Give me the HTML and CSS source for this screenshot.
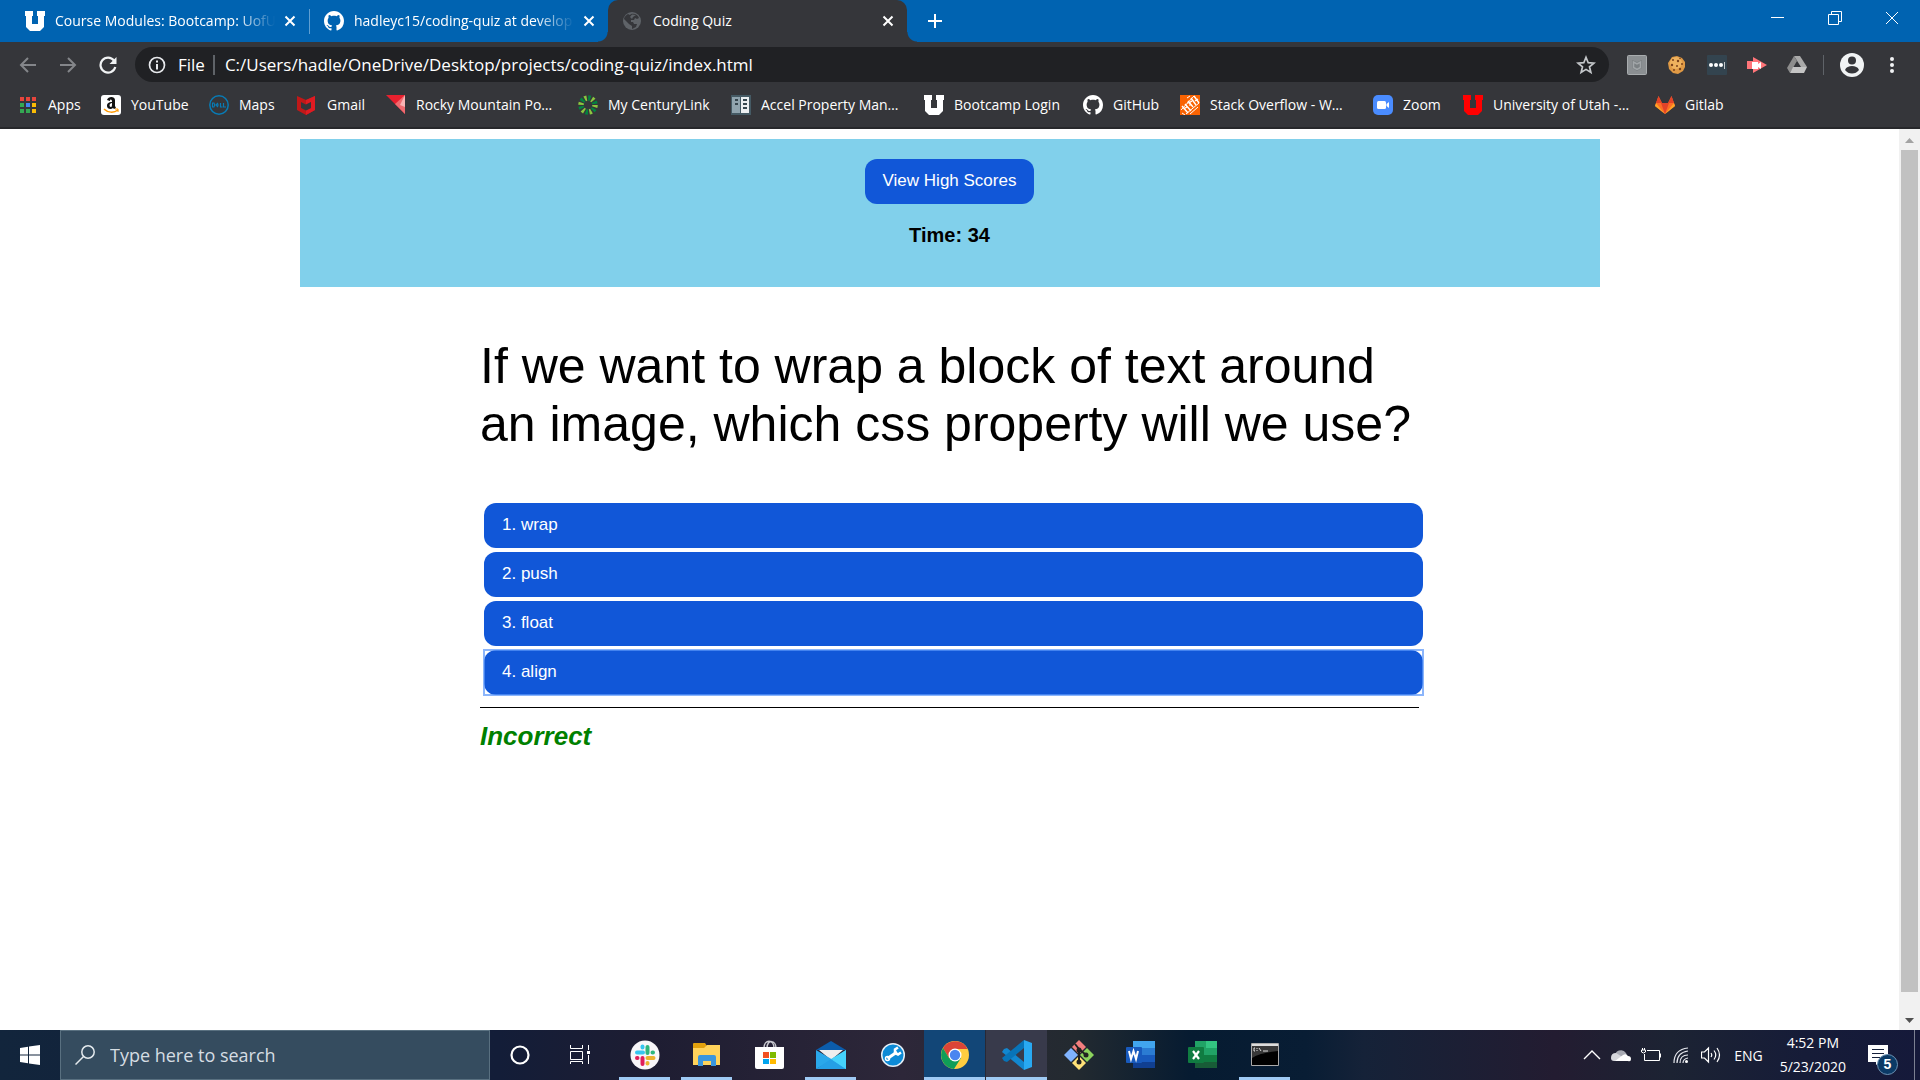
FILE: index.html
```html
<!DOCTYPE html>
<html lang="en">
<head>
<meta charset="utf-8">
<title>Coding Quiz</title>
<link rel="stylesheet" href="styles.css">
</head>
<body>
<svg class="defs" aria-hidden="true">
  <symbol id="block-u" viewBox="0 0 20 20"><path d="M0 0h8v5H7v8h6V5h-1V0h8v5h-1v11l-4 4H5l-4-4V5H0z"/></symbol>
  <symbol id="github" viewBox="0 0 16 16"><path d="M8 0C3.58 0 0 3.58 0 8c0 3.54 2.29 6.53 5.47 7.59.4.07.55-.17.55-.38 0-.19-.01-.82-.01-1.49-2.01.37-2.53-.49-2.69-.94-.09-.23-.48-.94-.82-1.13-.28-.15-.68-.52-.01-.53.63-.01 1.08.58 1.23.82.72 1.21 1.87.87 2.33.66.07-.52.28-.87.51-1.07-1.78-.2-3.64-.89-3.64-3.95 0-.87.31-1.59.82-2.15-.08-.2-.36-1.02.08-2.12 0 0 .67-.21 2.2.82.64-.18 1.32-.27 2-.27s1.36.09 2 .27c1.53-1.04 2.2-.82 2.2-.82.44 1.1.16 1.92.08 2.12.51.56.82 1.27.82 2.15 0 3.07-1.87 3.75-3.65 3.95.29.25.54.73.54 1.48 0 1.07-.01 1.93-.01 2.2 0 .21.15.46.55.38A8.01 8.01 0 0 0 16 8c0-4.42-3.58-8-8-8z"/></symbol>
  <symbol id="cross" viewBox="0 0 12 12"><path d="M1.500 1.500l9 9M10.500 1.500l-9 9" stroke="#fff" stroke-width="2"/></symbol>
</svg>

<header class="browser">
  <div class="tabstrip">
    <div class="tab">
      <svg class="icon20 white"><use href="#block-u"/></svg>
      <span class="tab-title fade">Course Modules: Bootcamp: UofU</span>
      <button class="plain" aria-label="Close tab"><svg class="icon12"><use href="#cross"/></svg></button>
    </div>
    <div class="tab divided">
      <svg class="icon20 white"><use href="#github"/></svg>
      <span class="tab-title fade">hadleyc15/coding-quiz at develop</span>
      <button class="plain" aria-label="Close tab"><svg class="icon12"><use href="#cross"/></svg></button>
    </div>
    <div class="tab active">
      <svg class="icon20" viewBox="0 0 20 20"><circle cx="9" cy="10" r="9" fill="#5f6368"/><path d="M8 3c4-1 7 1 8 4l-2 1-2-1-1 2-3 0 0 2 2 0 1 2 3 0-1 3-4 2 0-3-3-2-4-4-1-1c0-2 2-4 4-5l2 1z" fill="#35363a"/><path d="M9 3.500L7 6l2 2 1-2 3-2z" fill="#5f6368"/></svg>
      <span class="tab-title">Coding Quiz</span>
      <button class="plain" aria-label="Close tab"><svg class="icon12"><use href="#cross"/></svg></button>
    </div>
    <button class="plain new-tab" aria-label="New tab"><svg width="16" height="16" viewBox="0 0 16 16"><path d="M8 1v14M1 8h14" stroke="#fff" stroke-width="2"/></svg></button>
    <div class="window-controls">
      <button class="plain" aria-label="Minimize"><svg width="14" height="14" viewBox="0 0 14 14"><path d="M0 6.500h13" stroke="#fff"/></svg></button>
      <button class="plain" aria-label="Restore"><svg width="14" height="14" viewBox="0 0 14 14" fill="none" stroke="#fff"><path d="M.5 3.500h10v10H.5zM3.500 3.500v-3h10v10h-3"/></svg></button>
      <button class="plain" aria-label="Close"><svg width="14" height="14" viewBox="0 0 14 14"><path d="M1 1l12 12M13 1L1 13" stroke="#fff"/></svg></button>
    </div>
  </div>

  <div class="toolbar">
    <button class="plain nav" aria-label="Back"><svg width="18" height="18" viewBox="0 0 18 18" fill="none" stroke="#84868a" stroke-width="2"><path d="M17 9H2M9 2L2 9l7 7"/></svg></button>
    <button class="plain nav" aria-label="Forward"><svg width="18" height="18" viewBox="0 0 18 18" fill="none" stroke="#84868a" stroke-width="2"><path d="M1 9h15M9 2l7 7-7 7"/></svg></button>
    <button class="plain nav" aria-label="Reload"><svg width="18" height="18" viewBox="0 0 18 18"><path d="M15 4.500A7.500 7.500 0 1 0 16.300 11" fill="none" stroke="#f1f3f4" stroke-width="2.200"/><path d="M17.500 1v7h-7z" fill="#f1f3f4"/></svg></button>
    <div class="omnibox">
      <svg width="18" height="18" viewBox="0 0 18 18"><circle cx="9" cy="9" r="7.500" fill="none" stroke="#e8eaed" stroke-width="1.700"/><path d="M9 4.500v2M9 8v5.500" stroke="#e8eaed" stroke-width="2"/></svg>
      <label class="scheme" for="url">File</label>
      <input class="url" id="url" type="text" value="C:/Users/hadle/OneDrive/Desktop/projects/coding-quiz/index.html">
      <button class="plain" aria-label="Bookmark this page"><svg width="20" height="20" viewBox="0 0 20 20"><path d="M10 2.300l2.200 5.400 5.700.4-4.400 3.700 1.400 5.700-4.900-3.100-4.900 3.100 1.400-5.700L2.100 8.100l5.700-.4z" fill="none" stroke="#c4c7ca" stroke-width="1.700"/></svg></button>
    </div>
    <div class="extensions">
      <button class="plain" aria-label="WebAdvisor"><svg class="icon20" viewBox="0 0 20 20"><rect x=".5" y=".5" width="19" height="19" rx="1" fill="#8b8f92" stroke="#a8acae"/><path d="M5 5l5 2 5-2v8l-5 3-5-3z" fill="#7b8083"/><path d="M6.500 7v5.500l3.500 2 3.500-2V7L10 9z" fill="none" stroke="#a1a5a8" stroke-width="1.500"/></svg></button>
      <button class="plain" aria-label="Cookies"><svg class="icon20" viewBox="0 0 20 20"><path d="M5 2l5-1 5 2 3 4v5l-2 4-5 3-5-1-4-4L1 8z" fill="#e09a45"/><circle cx="9" cy="8" r="6" fill="#efb25e"/><g fill="#7b421b"><circle cx="6" cy="5" r="1"/><circle cx="11" cy="6" r="1.200"/><circle cx="5" cy="10" r="1.200"/><circle cx="10" cy="11" r="1"/><circle cx="15" cy="9" r="1"/><circle cx="13" cy="14" r="1.200"/><circle cx="7" cy="15" r="1"/><circle cx="13" cy="3.500" r=".8"/></g></svg></button>
      <button class="plain" aria-label="Passwords"><svg class="icon20" viewBox="0 0 20 20"><rect width="20" height="20" rx="1" fill="#33444f"/><g fill="#fff"><circle cx="4" cy="10" r="2"/><circle cx="9" cy="10" r="2"/><circle cx="14" cy="10" r="2"/><path d="M17 7h1v7h-1z" opacity=".7"/></g></svg></button>
      <button class="plain" aria-label="Screen recorder"><svg class="icon20" viewBox="0 0 20 20"><path d="M0 6h6V2l14 8-14 8v-4H0z" fill="#ff7579"/><path d="M5 7h6v2l3-2v7l-3-2v2H5z" fill="#fff"/></svg></button>
      <button class="plain" aria-label="Drive"><svg class="icon20" viewBox="0 0 20 20"><path d="M7 1h6l7 11h-6z" fill="#aaa"/><path d="M7 1l3 5-7 12-3-5z" fill="#8d8d8d"/><path d="M6 12h14l-3 6H3z" fill="#c4c4c4"/><path d="M10 7l3 5H7z" fill="#35363a"/></svg></button>
    </div>
    <button class="plain profile" aria-label="Profile"><svg width="24" height="24" viewBox="0 0 24 24"><circle cx="12" cy="12" r="12" fill="#f1f3f4"/><circle cx="12" cy="7.500" r="4" fill="#35363a"/><path d="M5 17c1-3 4-4 7-4s6 1 7 4c-2 2.500-4 3.500-7 3.500S7 19.500 5 17z" fill="#35363a"/></svg></button>
    <button class="plain menu" aria-label="Menu"><svg width="4" height="18" viewBox="0 0 4 18" fill="#f1f3f4"><circle cx="2" cy="3" r="2"/><circle cx="2" cy="9" r="2"/><circle cx="2" cy="15" r="2"/></svg></button>
  </div>

  <nav class="bookmarks" aria-label="Bookmarks">
    <a href="#"><svg width="18" height="18" viewBox="0 0 18 18"><path d="M0 1h4v4H0zM6 1h4v4H6zM12 1h4v4h-4z" fill="#e8453c"/><path d="M0 7h4v4H0zM0 13h4v4H0zM6 13h4v4H6z" fill="#34a853"/><path d="M6 7h4v4H6z" fill="#4285f4"/><path d="M12 7h4v4h-4zM12 13h4v4h-4z" fill="#fbbc05"/></svg><span>Apps</span></a>
    <a href="#"><svg class="icon20" viewBox="0 0 20 20"><rect width="20" height="20" rx="3" fill="#fff"/><path d="M6 5c1-4 8-4 8 0v6l1 2-2 1-1-1c-2 2-6 1-6-2 0-3 2-4 5-4 0-3-2-3-2-1zM11 8c-3 0-3 4-1 4 1 0 1-2 1-4z" fill="#111"/><path d="M3 14c4 4 10 4 14 1" fill="none" stroke="#f90" stroke-width="1.500"/><path d="M14 14h3v3" fill="none" stroke="#f90"/></svg><span>YouTube</span></a>
    <a href="#"><svg class="icon20" viewBox="0 0 20 20" fill="none" stroke="#087bb5"><circle cx="10" cy="10" r="9.200" stroke-width="1.500"/><path d="M3.500 8v4h1.500q1.500-2 0-4zM9 8L7 10l2 2M8 10h2M11.500 8v4h2M14.500 8v4H17" stroke-width="1.200"/></svg><span>Maps</span></a>
    <a href="#"><svg class="icon20" viewBox="0 0 20 20"><path d="M0 1l9 4 9-4v14l-9 5-9-5z" fill="#c01818"/><path d="M9 5l9-4v14l-9 5v-5l5-2V7L9 9.500 4 7v6l5 2v5" fill="#e01b22"/><path d="M4 7l5 2.500L14 7v6l-5 2.500L4 13z" fill="#35363a"/></svg><span>Gmail</span></a>
    <a href="#"><svg class="icon20" viewBox="0 0 20 20"><path d="M0 0h19v19z" fill="#e8202e"/><path d="M9 9L19 0v19z" fill="#ef6b70"/><path d="M14 10l5-10v12z" fill="#f9b4b4"/></svg><span>Rocky Mountain Po…</span></a>
    <a href="#"><svg class="icon20" viewBox="0 0 20 20" fill="none" stroke-width="5.500"><circle cx="10" cy="10" r="7" stroke="#8cc63f" stroke-dasharray="2.200 5.130"/><circle cx="10" cy="10" r="7" stroke="#00853f" stroke-dasharray="2.200 5.130" stroke-dashoffset="3.660"/></svg><span>My CenturyLink</span></a>
    <a href="#"><svg class="icon20" viewBox="0 0 20 20"><path d="M0 0h20v20H0z" fill="#455a64"/><path d="M1 2h8v16H1z" fill="#90a4ae"/><path d="M10 2h8v16h-8z" fill="#eceff1"/><path d="M4 4h3v2H4zM4 8h3v2H4zM12 4h4v2h-4zM12 8h4v2h-4zM12 12h4v2h-4z" fill="#37474f"/></svg><span>Accel Property Man…</span></a>
    <a href="#"><svg class="icon20 white"><use href="#block-u"/></svg><span>Bootcamp Login</span></a>
    <a href="#"><svg class="icon20 white"><use href="#github"/></svg><span>GitHub</span></a>
    <a href="#"><svg class="icon20" viewBox="0 0 20 20"><path d="M0 0h20v20H0z" fill="#f96302"/><g stroke="#fff" fill="none"><path d="M2 11l6 7M5 9l6 7M3.500 14L7 12M8 6l5 6M11 3l5 7M9 8l3-2M14 1l5 7M15 6l3-2" stroke-width="1.400"/><path d="M1 15l13-14M6 19L19 8M7 8q3-1 3 3M10 19l8-7M2 18l3 2M7 3l3-2" stroke-width="1"/></g></svg><span>Stack Overflow - W…</span></a>
    <a href="#"><svg class="icon20" viewBox="0 0 20 20"><rect width="20" height="20" rx="5" fill="#4a8cff"/><rect x="4" y="6" width="9" height="8" rx="1.500" fill="#fff"/><path d="M13.500 9L16 7v6l-2.500-2z" fill="#fff"/></svg><span>Zoom</span></a>
    <a href="#"><svg class="icon20 red"><use href="#block-u"/></svg><span>University of Utah -…</span></a>
    <a href="#"><svg class="icon20" viewBox="0 0 20 20"><path d="M10 19L0 11 3.500 1 7 8h6l3.500-7L20 11z" fill="#fc6d26"/><path d="M6 8h8l-4 11z" fill="#e24329"/><path d="M3.500 1L7 8H1zM16.500 1L13 8h6z" fill="#e24329"/><path d="M10 19L0 11l1-3zM10 19l10-8-1-3z" fill="#fca326"/></svg><span>Gitlab</span></a>
  </nav>
</header>

<div class="viewport">
  <div class="page">
    <header class="quiz-header">
      <button class="btn">View High Scores</button>
      <p class="timer">Time: 34</p>
    </header>
    <main class="quiz">
      <h1 class="question">If we want to wrap a block of text around an image, which css property will we use?</h1>
      <ul class="answers">
        <li><button class="btn">1. wrap</button></li>
        <li><button class="btn">2. push</button></li>
        <li><button class="btn">3. float</button></li>
        <li class="focused"><button class="btn">4. align</button></li>
      </ul>
      <p class="feedback">Incorrect</p>
    </main>
  </div>
  <div class="scrollbar" aria-hidden="true">
    <svg width="9" height="5" viewBox="0 0 9 5"><path d="M0 5l4.500-5L9 5z" fill="#a3a3a3"/></svg>
    <div class="thumb"></div>
    <svg width="9" height="5" viewBox="0 0 9 5"><path d="M0 0l4.500 5L9 0z" fill="#505050"/></svg>
  </div>
</div>

<footer class="taskbar">
  <button class="plain start" aria-label="Start"><svg class="icon20" viewBox="0 0 20 20" fill="#fff"><path d="M0 3l8-1.200V9.500H0zM9 1.600L20 0v9.500H9zM0 10.500h8v7.700L0 17zM9 10.500h11V20L9 18.400z"/></svg></button>
  <div class="search">
    <svg class="icon20" viewBox="0 0 20 20" fill="none" stroke="#e4eaee" stroke-width="1.500"><circle cx="13" cy="7" r="6.200"/><path d="M8.500 11.500L.5 19.500"/></svg>
    <input type="text" placeholder="Type here to search" aria-label="Type here to search">
  </div>
  <button class="plain system" aria-label="Cortana"><svg class="icon20" viewBox="0 0 20 20"><circle cx="10" cy="10" r="8.500" fill="none" stroke="#fff" stroke-width="2.200"/></svg></button>
  <button class="plain system" aria-label="Task View"><svg class="icon20" viewBox="0 0 20 20" fill="none" stroke="#fff"><path d="M.5 0v3.500h12V0M.5 6.500h12v8H.5zM.5 19v-2.500h12V19M18.500 0v5M18.500 10v9"/><path d="M17 6h3v3h-3z" fill="#fff" stroke="none"/></svg></button>
  <div class="apps">
    <button class="app running" aria-label="Slack"><svg width="30" height="30" viewBox="0 0 30 30"><circle cx="15" cy="15" r="14.500" fill="#f8f6f8"/><g stroke-width="4" stroke-linecap="round"><path d="M7 12.500h6M12.500 6.500v1" stroke="#36c5f0"/><path d="M17.500 7v6M23 12.500h-.5" stroke="#2eb67d"/><path d="M17.500 18h6M17.500 23v.5" stroke="#ecb22e"/><path d="M12.500 18v6M7.500 18H7" stroke="#e01e5a"/></g></svg></button>
    <button class="app running" aria-label="File Explorer"><svg width="30" height="30" viewBox="0 0 30 30"><path d="M1 4q0-1 1-1h11l2 3-2 4H1z" fill="#e2a10d"/><path d="M1 8h11l3-3h13v20H1z" fill="#ffd35b"/><path d="M6 26V17q0-2 2-2h14q2 0 2 2v9h-5v-5h-8v5z" fill="#3a96dd"/></svg></button>
    <button class="app" aria-label="Microsoft Store"><svg width="30" height="30" viewBox="0 0 30 30"><path d="M10 8c0-9 10-9 10 0M13 8c0-9 9-8 9 0" fill="none" stroke="#c9c9d0" stroke-width="1.500"/><path d="M1 7h29v20q0 2-2 2H3q-2 0-2-2z" fill="#fff"/><path d="M9 12h6v6H9z" fill="#f25022"/><path d="M16 12h6v6h-6z" fill="#7fba00"/><path d="M9 19h6v5H9z" fill="#00a4ef"/><path d="M16 19h6v5h-6z" fill="#ffb900"/></svg></button>
    <button class="app running" aria-label="Mail"><svg width="30" height="30" viewBox="0 0 30 30"><path d="M0 10l15-9 15 9z" fill="#0b5cab"/><path d="M3 10h24L15 20z" fill="#eee"/><path d="M0 10l17 10-17 9z" fill="#2aa8ea"/><path d="M30 10L4 29h26z" fill="#3ec5f5"/><path d="M0 29L15 19l15 10z" fill="#25a0e6"/><path d="M30 10L15 19l15 10z" fill="#45d2fb"/></svg></button>
    <button class="app" aria-label="Support tool"><svg width="30" height="30" viewBox="0 0 30 30"><circle cx="15" cy="15" r="11.300" fill="#0c8ad6" stroke="#e5eef5" stroke-width="1.500"/><path d="M9.500 18.500L19 12" stroke="#fff" stroke-width="3"/><circle cx="9.500" cy="18.500" r="2" fill="none" stroke="#fff" stroke-width="1.500"/><path d="M20 7.500l-3 2v3.500l3 1.500 3-2" fill="none" stroke="#fff" stroke-width="2.500"/></svg></button>
    <button class="app running chrome" aria-label="Chrome"><svg width="30" height="30" viewBox="0 0 30 30"><circle cx="15" cy="15" r="14" fill="#ffcd40"/><path d="M3 8a14 14 0 0 1 24.500 1H15l-6 9z" fill="#db4437"/><path d="M3 8a14 14 0 0 0 11 21l7-11-12 0z" fill="#0f9d58"/><circle cx="15" cy="15" r="6.500" fill="#fff"/><circle cx="15" cy="15" r="5.200" fill="#4a86f0"/></svg></button>
    <button class="app running code" aria-label="Visual Studio Code"><svg width="30" height="30" viewBox="0 0 30 30"><path d="M2 9l3-1 17 14v8L0 12z" fill="#1287d0"/><path d="M2 21l3 1L22 8V0L0 18z" fill="#0874b9"/><path d="M22 0l8 3v24l-8 3z" fill="#29a9f2"/></svg></button>
    <button class="app" aria-label="Git Bash"><svg width="30" height="30" viewBox="0 0 30 30"><path d="M15 0l7 7-7 7-7-7z" fill="#f37e7e"/><path d="M23 8l7 7-7 7-7-7z" fill="#8cd35d"/><path d="M15 16l7 7-7 7-7-7z" fill="#ffe278"/><path d="M7 8l7 7-7 7-7-7z" fill="#80b3ff"/><path d="M11 4l4 5v13M15 9l7 6" fill="none" stroke="#222" stroke-width="2"/><g fill="#222"><circle cx="15" cy="10" r="2.500"/><circle cx="22" cy="15" r="2.500"/><circle cx="15" cy="22" r="2.500"/></g></svg></button>
    <button class="app" aria-label="Word"><svg width="30" height="30" viewBox="0 0 30 30"><path d="M7 1h22v7H7z" fill="#41a5ee"/><path d="M7 8h22v7H7z" fill="#2b7cd3"/><path d="M7 15h22v7H7z" fill="#185abd"/><path d="M7 22h22v6H7z" fill="#103f91"/><rect y="7" width="16" height="16" rx="1" fill="#185abd"/><path d="M3 11l2 8 2.500-8L10 19l2-8" fill="none" stroke="#fff" stroke-width="2"/></svg></button>
    <button class="app" aria-label="Excel"><svg width="30" height="30" viewBox="0 0 30 30"><path d="M7 1h11v7H7zM7 8h11v7H7z" fill="#21a366"/><path d="M18 1h11v7H18z" fill="#33c481"/><path d="M18 8h11v7H18z" fill="#21a366"/><path d="M7 15h22v7H7z" fill="#107c41"/><path d="M7 22h22v6H7z" fill="#185c37"/><rect y="7" width="16" height="16" rx="1" fill="#107c41"/><path d="M5 11l6 8M11 11l-6 8" stroke="#fff" stroke-width="2.200"/></svg></button>
    <button class="app running" aria-label="Command Prompt"><svg width="30" height="30" viewBox="0 0 30 30"><path d="M1.500 3.500h27v22h-27z" fill="#000" stroke="#a9a9a9"/><path d="M2 4h26v2H2z" fill="#ddd"/><path d="M2 6h26v5C18 12 8 14 2 18z" fill="#383838"/><path d="M5 8H4v3h1M7 8v1M7 10v1M9 8l2 3M13 11h5" fill="none" stroke="#ddd"/></svg></button>
  </div>
  <div class="tray">
    <svg width="18" height="10" viewBox="0 0 18 10"><path d="M1 9l8-8 8 8" fill="none" stroke="#fff" stroke-width="1.400"/></svg>
    <svg class="icon20" viewBox="0 0 20 20"><path d="M4 12a6 6 0 0 1 11-4l2 5-12 2z" fill="#a9abb4"/><path d="M0 13q0-5 5-5l13 8H3q-3 0-3-3z" fill="#d6d7dc"/><path d="M4 16l8-6q3-2 5 1 3 0 3 3t-3 2z" fill="#fff"/></svg>
    <svg class="icon20" viewBox="0 0 20 20" fill="none" stroke="#fff"><path d="M6 5.500h12.500v10h-15V9M19.500 8.500v4M.5 5h4v2q-2 2-4 0zM1.500 5V3M3.500 5V3"/></svg>
    <svg class="icon20" viewBox="0 0 20 20" fill="none" stroke="#e6e8ee" stroke-width="1.200"><path d="M3 18C3 9 8 4 17 3M6 18C6 11 10 7 17 6M9 18C9 13 12 10 17 10M12 18q0-4 5-5"/><circle cx="15.500" cy="16.500" r="1.500" fill="#fff" stroke="none"/></svg>
    <svg class="icon20" viewBox="0 0 20 20" fill="none" stroke="#fff" stroke-width="1.200"><path d="M.5 7h3l4-4v14l-4-4h-3zM10 8q1.500 2 0 4M13 5.500q3.500 4.500 0 9M16 3q5 7 0 14"/></svg>
    <span class="lang">ENG</span>
    <div class="clock"><time>4:52 PM</time><time>5/23/2020</time></div>
    <button class="plain notice" aria-label="Notifications"><svg class="icon20" viewBox="0 0 20 20"><path d="M0 0h20v17h-8l-4 3v-3H0z" fill="#fff"/><path d="M4 4.500h12M4 8.500h12M4 12.500h8" stroke="#15203a"/></svg><span class="badge">5</span></button>
  </div>
</footer>
</body>
</html>
```

FILE: styles.css
```css
* { box-sizing: border-box; }

body {
  margin: 0;
  height: 100vh;
  display: flex;
  flex-direction: column;
  overflow: hidden;
  background: #fff;
  font-family: "Open Sans", "Noto Sans", sans-serif;
  font-size: 14px;
}

svg { display: block; flex: none; }
p, h1, ul { margin: 0; padding: 0; }
.defs { position: absolute; width: 0; height: 0; }
.icon20 { width: 20px; height: 20px; }
.icon12 { width: 12px; height: 12px; }
.white { fill: #fff; }
.red { fill: #f00; }

.plain {
  display: flex;
  align-items: center;
  justify-content: center;
  padding: 0;
  border: 0;
  background: none;
  color: inherit;
  flex: none;
}

/* Browser chrome */
.browser {
  background: #35363a;
  color: #fff;
  border-bottom: 2px solid #27282b;
  flex: none;
}

.tabstrip {
  display: flex;
  height: 42px;
  padding-left: 10px;
  background: #0063b1;
}

.tab {
  position: relative;
  display: flex;
  align-items: center;
  width: 299px;
  padding: 0 13px 0 15px;
}

.tab.divided::before {
  content: "";
  position: absolute;
  left: 0;
  top: 9px;
  width: 1px;
  height: 25px;
  background: #5f9fd2;
}

.tab-title {
  flex: 1;
  margin: 0 2px 0 10px;
  padding-bottom: 2px;
  overflow: hidden;
  white-space: nowrap;
}
.fade { mask-image: linear-gradient(to right, #000 80%, transparent 97%); }

.tab.active { background: #35363a; border-radius: 10px 10px 0 0; }
.tab.active::before,
.tab.active::after {
  content: "";
  position: absolute;
  bottom: 0;
  width: 10px;
  height: 10px;
}
.tab.active::before { left: -10px; background: radial-gradient(circle at 0 0, transparent 9px, #35363a 10px); }
.tab.active::after { right: -10px; background: radial-gradient(circle at 100% 0, transparent 9px, #35363a 10px); }

.new-tab { width: 56px; }
.window-controls { display: flex; margin-left: auto; }
.window-controls .plain { width: 57px; height: 36px; }

.toolbar {
  display: flex;
  align-items: center;
  height: 45px;
  padding: 0 16px 0 8px;
}
.nav { width: 40px; height: 36px; }

.omnibox {
  display: flex;
  align-items: center;
  flex: 1;
  height: 35px;
  margin-left: 7px;
  padding: 0 13px;
  border-radius: 18px;
  background: #202124;
  font-size: 17px;
}
.scheme {
  margin-left: 12px;
  padding-right: 8px;
  border-right: 2px solid #5f6368;
  line-height: 20px;
}
.url {
  flex: 1;
  min-width: 0;
  margin-left: 10px;
  padding: 0;
  border: 0;
  background: none;
  color: #fff;
  font: inherit;
}

.extensions { display: flex; gap: 20px; margin-left: 18px; padding-right: 17px; position: relative; }
.extensions::after {
  content: "";
  position: absolute;
  right: 0;
  top: 0;
  width: 1px;
  height: 20px;
  background: #5f6368;
}
.profile { margin-left: 16px; }
.menu { width: 24px; margin-left: 16px; }

.bookmarks {
  display: grid;
  grid-template-columns: 81px 108px 88px 89px 192px 153px 193px 159px 97px 193px 90px 192px auto;
  align-items: center;
  height: 40px;
  padding: 0 20px 4px;
}
.bookmarks a {
  display: flex;
  align-items: center;
  gap: 10px;
  color: #fff;
  text-decoration: none;
  white-space: nowrap;
}
.bookmarks span { padding-bottom: 2px; }

/* Quiz page */
.viewport { display: flex; flex: 1; min-height: 0; }
.page {
  flex: 1;
  padding: 10px;
  font-family: "Liberation Sans", Arial, sans-serif;
  color: #000;
}

.quiz-header {
  display: flex;
  flex-direction: column;
  align-items: center;
  gap: 20px;
  max-width: 1300px;
  height: 148px;
  margin: 0 auto;
  padding-top: 20px;
  background: #81d0eb;
}

.btn {
  height: 45px;
  padding: 0 18px 1px;
  border: 0;
  border-radius: 12px;
  background: #1157d8;
  color: #fff;
  font-family: inherit;
  font-size: 17px;
}

.timer { font-size: 20px; font-weight: bold; line-height: 23px; }

.quiz { max-width: 939px; margin: 50px auto 0; }
.question { font-size: 50px; font-weight: normal; line-height: 58px; }

.answers {
  display: grid;
  gap: 4px;
  margin: 50px -4px 12px 4px;
  list-style: none;
}
.answers .btn { display: block; width: 100%; text-align: left; }
.focused { outline: 2px solid rgba(90, 150, 250, 0.7); outline-offset: -1px; }

.feedback {
  padding-top: 13px;
  border-top: 1px solid #000;
  color: #008000;
  font-size: 26px;
  font-style: italic;
  font-weight: bold;
  line-height: 30px;
}

.scrollbar {
  display: flex;
  flex-direction: column;
  align-items: center;
  gap: 7px;
  width: 21px;
  padding: 9px 0 7px;
  background: #f1f1f1;
}
.thumb { flex: 1; width: 17px; margin-bottom: 19px; background: #c1c1c1; }

/* Taskbar */
.taskbar {
  display: flex;
  flex: none;
  height: 50px;
  color: #fff;
  background: linear-gradient(to right, #12253c, #131d38 26%, #1e1d32 34%, #2d2739 47%, #232a30 56%, #061b31 62%, #081d34 68%, #152238 71%, #231c31 81%, #1c2333 87%, #161c38 94%, #15193a);
}
.start { width: 60px; }
.search {
  display: flex;
  align-items: center;
  gap: 15px;
  width: 430px;
  padding: 0 14px;
  border: 1px solid #597080;
  background: #354c5f;
}
.search input {
  flex: 1;
  min-width: 0;
  padding: 0;
  border: 0;
  background: none;
  color: #fff;
  font: inherit;
  font-size: 18px;
}
.search input::placeholder { color: #d5dde3; opacity: 1; }
.system { width: 60px; }

.apps { display: flex; gap: 1px; margin-left: 4px; }
.app {
  position: relative;
  display: flex;
  align-items: center;
  justify-content: center;
  width: 61px;
  padding: 0;
  border: 0;
  background: none;
}
.app.running::after {
  content: "";
  position: absolute;
  left: 5px;
  right: 5px;
  bottom: 0;
  height: 3px;
  background: #9fcaf4;
}
.app.chrome::after, .app.code::after { left: 0; right: 0; }
.chrome { background: #124677; }
.code { background: #383a4b; }

.tray {
  display: flex;
  align-items: center;
  gap: 10px;
  margin-left: auto;
  padding-right: 26px;
  margin-right: 5px;
  border-right: 1px solid #7c8092;
}
.lang { margin-left: 3px; font-size: 14px; }
.clock {
  display: flex;
  flex-direction: column;
  align-items: center;
  margin: 0 12px 0 7px;
  font-size: 14px;
  line-height: 24px;
}
.notice { position: relative; }
.badge {
  position: absolute;
  left: 9px;
  top: 9px;
  width: 21px;
  height: 21px;
  border: 1px solid #6d93b4;
  border-radius: 50%;
  background: #0b3a66;
  color: #fff;
  font-size: 14px;
  font-weight: bold;
  line-height: 19px;
  text-align: center;
}
```
